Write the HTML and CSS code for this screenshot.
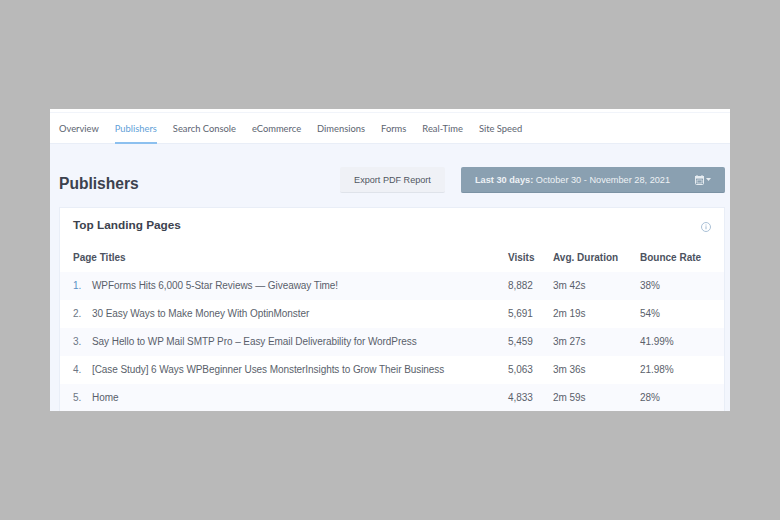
FILE: index.html
```html
<!DOCTYPE html>
<html lang="en">
<head>
<meta charset="utf-8">
<title>Publishers</title>
<link rel="stylesheet" href="styles.css">
</head>
<body>
<main class="frame">
  <nav class="tabs">
    <a class="tab">Overview</a>
    <a class="tab active">Publishers</a>
    <a class="tab">Search Console</a>
    <a class="tab">eCommerce</a>
    <a class="tab">Dimensions</a>
    <a class="tab">Forms</a>
    <a class="tab">Real-Time</a>
    <a class="tab">Site Speed</a>
  </nav>
  <section class="content">
    <header class="head">
      <h1 class="title">Publishers</h1>
      <button class="btn-export">Export PDF Report</button>
      <button class="btn-date">
        <span class="date-text"><b>Last 30 days:</b> October 30 - November 28, 2021</span>
        <svg class="cal" width="9" height="10" viewBox="0 0 9 10"><path d="M2 0v2M7 0v2" stroke="#e6ecf1" stroke-width="1"/><rect x=".5" y="1.5" width="8" height="8" rx="1" fill="none" stroke="#e6ecf1"/><rect x="0" y="1" width="9" height="2.6" fill="#e6ecf1"/><path d="M2 5h5v3H2z" fill="none" stroke="#e6ecf1" stroke-width=".7"/></svg>
        <svg class="caret" width="5" height="3" viewBox="0 0 5 3"><path d="M0 0h5L2.500 3z" fill="#e6ecf1"/></svg>
      </button>
    </header>
    <article class="card">
      <div class="card-head">
        <h2 class="card-title">Top Landing Pages</h2>
        <svg class="info" width="10" height="10" viewBox="0 0 10 10"><circle cx="5" cy="5" r="4.500" fill="none" stroke="#aac0d6"/><path d="M5 4.300v3M5 2.500v1" stroke="#aac0d6" stroke-width="1.100"/></svg>
      </div>
      <table class="report">
        <colgroup><col class="c-rank"><col class="c-title"><col class="c-visits"><col class="c-dur"><col class="c-rate"></colgroup>
        <thead>
          <tr><th colspan="2">Page Titles</th><th>Visits</th><th>Avg. Duration</th><th>Bounce Rate</th></tr>
        </thead>
        <tbody>
          <tr><td class="rank first">1.</td><td>WPForms Hits 6,000 5-Star Reviews — Giveaway Time!</td><td>8,882</td><td>3m 42s</td><td>38%</td></tr>
          <tr><td class="rank">2.</td><td>30 Easy Ways to Make Money With OptinMonster</td><td>5,691</td><td>2m 19s</td><td>54%</td></tr>
          <tr><td class="rank">3.</td><td>Say Hello to WP Mail SMTP Pro – Easy Email Deliverability for WordPress</td><td>5,459</td><td>3m 27s</td><td>41.99%</td></tr>
          <tr><td class="rank">4.</td><td>[Case Study] 6 Ways WPBeginner Uses MonsterInsights to Grow Their Business</td><td>5,063</td><td>3m 36s</td><td>21.98%</td></tr>
          <tr><td class="rank">5.</td><td>Home</td><td>4,833</td><td>2m 59s</td><td>28%</td></tr>
        </tbody>
      </table>
    </article>
  </section>
</main>
</body>
</html>
```
FILE: styles.css
```css
* { box-sizing: border-box; }
html, body { margin: 0; height: 100%; }
body {
  background: #b9b9b9;
  display: flex;
  align-items: center;
  justify-content: center;
  font-family: "Liberation Sans", Arial, sans-serif;
}
.frame {
  width: 680px;
  height: 302px;
  background: #f3f6fd;
  overflow: hidden;
  display: flex;
  flex-direction: column;
}
.tabs {
  height: 35px;
  flex: none;
  background: #fff;
  border-top: 3px solid #fff;
  border-bottom: 1px solid #e9eef7;
  box-shadow: inset 0 1px 0 #f1f4fa;
  display: flex;
  gap: 16px;
  padding: 0 0 0 9px;
  font-family: Lato, sans-serif;
  font-size: 9.350px;
  color: #5c6470;
}
.tab {
  display: flex;
  align-items: center;
  height: 32px;
  padding-top: 2px;
  border-bottom: 2px solid transparent;
}
.tab.active {
  color: #5f9fd8;
  border-bottom: 2px solid #8cc0ef;
}
.content { flex: 1; padding: 23px 5px 0 9px; }
.head { display: flex; align-items: center; height: 26px; }
.title {
  margin: 0 auto 0 0;
  font-size: 15.600px;
  line-height: 26px;
  padding-top: 4px;
  height: 26px;
  color: #3c424e;
  font-weight: 700;
}
.btn-export {
  width: 105px;
  height: 26px;
  margin-right: 16px;
  padding: 0;
  border: 0;
  border-radius: 2px;
  background: #eff1f6;
  border-bottom: 1px solid #dfe3ea;
  color: #50565f;
  font: 9.100px "Liberation Sans", Arial, sans-serif;
}
.btn-date {
  width: 264px;
  height: 26px;
  display: flex;
  align-items: center;
  padding: 0 14px;
  border: 0;
  border-radius: 2px;
  background: #8aa0b1;
  border-bottom: 1px solid #7b92a4;
  color: #eef2f5;
  font: 9.200px "Liberation Sans", Arial, sans-serif;
}
.date-text { margin-right: auto; }
.date-text b { font-weight: 700; }
.caret { margin-left: 2px; }
.card {
  margin-top: 14px;
  background: #fff;
  border: 1px solid #e9eef7;
  height: 220px;
}
.card-head {
  display: flex;
  align-items: center;
  justify-content: space-between;
  height: 34px;
  padding: 0 14px 0 13px;
}
.card-title {
  margin: 0 0 1px;
  font-size: 11.800px;
  color: #3c424e;
  font-weight: 700;
}
.info { margin-top: 3px; margin-right: -1px; }
.report {
  width: 664px;
  table-layout: fixed;
  border-collapse: collapse;
  font-size: 10px;
  letter-spacing: -.07px;
  color: #5a5f6b;
}
.c-rank { width: 32px; }
.c-title { width: 416px; }
.c-visits { width: 45px; }
.c-dur { width: 87px; }
.c-rate { width: 84px; }
.report th {
  height: 30px;
  padding: 0;
  text-align: left;
  font-weight: 700;
  font-size: 10px;
  letter-spacing: 0;
  color: #4c5260;
}
.report th:first-child { padding-left: 13px; }
.report td { height: 28px; padding: 0 0 1px; white-space: nowrap; }
.report td.rank { padding-left: 13px; color: #6b7684; }
.report td.first { color: #5a8fc4; }
.report tbody tr:nth-child(odd) { background: #f9fafe; }
```
